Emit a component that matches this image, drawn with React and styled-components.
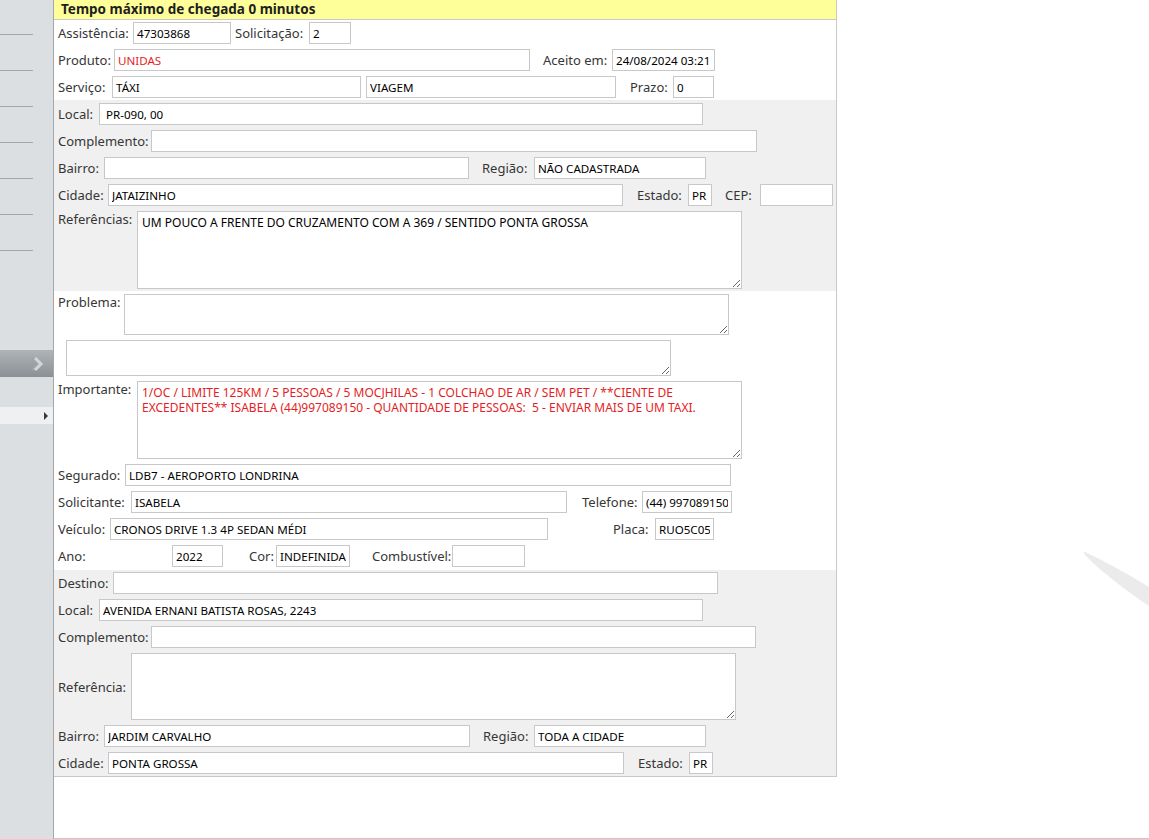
import React from "react";
import styled, { createGlobalStyle } from "styled-components";

const GlobalStyle = createGlobalStyle`
  html, body {
    margin: 0;
    padding: 0;
    background: #fff;
  }
  body {
    font-family: "Noto Sans", "DejaVu Sans", sans-serif;
  }
`;

const Page = styled.div`
  position: relative;
  display: flex;
  height: 839px;
  overflow: hidden;
`;

const Sidebar = styled.aside`
  width: 54px;
  flex-shrink: 0;
  box-sizing: border-box;
  background: #dcdfe2;
  border-right: 1px solid #a5a8ab;
  display: flex;
  flex-direction: column;
`;

const MenuList = styled.ul`
  list-style: none;
  margin: 0;
  padding: 34px 0 0;
`;

const MenuItem = styled.li`
  width: 33px;
  height: 35px;
  border-top: 1px solid #a4a7aa;
`;

const CollapseBar = styled.div`
  margin-top: 64px;
  height: 27px;
  display: flex;
  align-items: center;
  justify-content: flex-end;
  padding-right: 9px;
  background: linear-gradient(#b0b4b8, #8b9095);
`;

const SubItem = styled.div`
  margin-top: 30px;
  height: 17px;
  display: flex;
  align-items: center;
  justify-content: flex-end;
  padding-right: 5px;
  background: #eef0f1;
`;

const Caret = styled.span`
  width: 0;
  height: 0;
  border-left: 4px solid #3a3a3a;
  border-top: 4px solid transparent;
  border-bottom: 4px solid transparent;
`;

const Content = styled.main`
  flex: 1;
  box-sizing: border-box;
  height: 100%;
  border-bottom: 1px solid #c9c9c9;
`;

const Panel = styled.div`
  width: 783px;
  box-sizing: border-box;
  border-right: 1px solid #c9c9c9;
`;

const Header = styled.div`
  height: 19px;
  line-height: 19px;
  padding-left: 7px;
  background: #ffff99;
  border-bottom: 1px solid #c9c9c9;
  font-size: 13.5px;
  font-weight: 700;
  color: #1e1e1e;
  white-space: nowrap;
`;

const Section = styled.section`
  display: flex;
  flex-direction: column;
  gap: 5px;
  padding: ${(p) => p.$pad} 0 ${(p) => p.$padBottom} 4px;
  background: ${(p) => (p.$shaded ? "#f0f0f0" : "#fff")};
  border-bottom: ${(p) => (p.$closed ? "1px solid #c9c9c9" : "none")};
`;

const Row = styled.div`
  display: flex;
  align-items: ${(p) => p.$align || "center"};
  padding-left: ${(p) => p.$indent || 0}px;
`;

const Label = styled.label`
  flex-shrink: 0;
  width: ${(p) => p.$w}px;
  margin-left: ${(p) => p.$ml || 0}px;
  font-size: 13px;
  line-height: 16px;
  color: #363636;
  white-space: nowrap;
`;

const Input = styled.input`
  flex-shrink: 0;
  box-sizing: border-box;
  width: ${(p) => p.$w}px;
  height: 22px;
  margin: 0 0 0 ${(p) => p.$ml || 0}px;
  padding: 0 3px;
  border: 1px solid #c8c8c8;
  background: #fff;
  font-family: "Noto Sans", "DejaVu Sans", sans-serif;
  font-size: 11.6px;
  color: ${(p) => (p.$alert ? "#e41e24" : "#000")};
  outline: none;
`;

const TextArea = styled.textarea`
  flex-shrink: 0;
  box-sizing: border-box;
  width: ${(p) => p.$w}px;
  height: ${(p) => p.$h}px;
  margin: 0;
  padding: 3px 4px;
  border: 1px solid #c8c8c8;
  background: #fff;
  font-family: "Noto Sans", "DejaVu Sans", sans-serif;
  font-size: 12px;
  line-height: 15px;
  color: ${(p) => (p.$alert ? "#e41e24" : "#000")};
  outline: none;
`;

const Watermark = styled.svg`
  position: absolute;
  left: 1080px;
  top: 548px;
  width: 69px;
  height: 64px;
`;

const Chevron = () => (
  <svg width="14" height="16" viewBox="0 0 14 16">
    <path d="M2 2 L8 8 L2 14" fill="none" stroke="#9ea3a8" strokeWidth="3" />
    <path d="M5 2 L11 8 L5 14" fill="none" stroke="#d3d6d9" strokeWidth="3" />
  </svg>
);

const Field = ({ label, lw, lml, w, ml, value, alert }) => (
  <>
    <Label $w={lw} $ml={lml}>{label}</Label>
    <Input $w={w} $ml={ml} $alert={alert} readOnly defaultValue={value || ""} />
  </>
);

const importante =
  "1/OC / LIMITE 125KM / 5 PESSOAS / 5 MOCJHILAS - 1 COLCHAO DE AR / SEM PET / **CIENTE DE EXCEDENTES** ISABELA (44)997089150 - QUANTIDADE DE PESSOAS:  5 - ENVIAR MAIS DE UM TAXI.";

export default function App() {
  return (
    <>
      <GlobalStyle />
      <Page>
        <Sidebar>
          <MenuList>
            {Array.from({ length: 7 }).map((_, i) => (
              <MenuItem key={i} />
            ))}
          </MenuList>
          <CollapseBar>
            <Chevron />
          </CollapseBar>
          <SubItem>
            <Caret />
          </SubItem>
        </Sidebar>

        <Content>
          <Panel>
            <Header>Tempo máximo de chegada 0 minutos</Header>

            <Section $pad="2px" $padBottom="2px">
              <Row>
                <Field label="Assistência:" lw={75} w={98} value="47303868" />
                <Field label="Solicitação:" lw={74} lml={4} w={42} value="2" />
              </Row>
              <Row>
                <Field label="Produto:" lw={56} w={416} value="UNIDAS" alert />
                <Field label="Aceito em:" lw={69} lml={13} w={103} value="24/08/2024 03:21" />
              </Row>
              <Row>
                <Field label="Serviço:" lw={54} w={249} value="TÁXI" />
                <Input $w={250} $ml={5} readOnly defaultValue="VIAGEM" />
                <Field label="Prazo:" lw={43} lml={14} w={41} value="0" />
              </Row>
            </Section>

            <Section $shaded $pad="3px" $padBottom="2px">
              <Row>
                <Field label="Local:" lw={41} w={604} value=" PR-090, 00" />
              </Row>
              <Row>
                <Field label="Complemento:" lw={93} w={606} />
              </Row>
              <Row>
                <Field label="Bairro:" lw={46} w={365} />
                <Field label="Região:" lw={52} lml={13} w={172} value="NÃO CADASTRADA" />
              </Row>
              <Row>
                <Field label="Cidade:" lw={50} w={515} value="JATAIZINHO" />
                <Field label="Estado:" lw={51} lml={14} w={24} value="PR" />
                <Field label="CEP:" lw={35} lml={13} w={73} />
              </Row>
              <Row $align="flex-start">
                <Label $w={79}>Referências:</Label>
                <TextArea
                  $w={605}
                  $h={78}
                  readOnly
                  defaultValue="UM POUCO A FRENTE DO CRUZAMENTO COM A 369 / SENTIDO PONTA GROSSA"
                />
              </Row>
            </Section>

            <Section $pad="3px" $padBottom="3px">
              <Row $align="flex-start">
                <Label $w={66}>Problema:</Label>
                <TextArea $w={605} $h={41} readOnly defaultValue="" />
              </Row>
              <Row $indent={8}>
                <TextArea $w={605} $h={36} readOnly defaultValue="" />
              </Row>
              <Row $align="flex-start">
                <Label $w={79}>Importante:</Label>
                <TextArea $w={605} $h={78} $alert readOnly defaultValue={importante} />
              </Row>
              <Row>
                <Field label="Segurado:" lw={67} w={606} value="LDB7 - AEROPORTO LONDRINA" />
              </Row>
              <Row>
                <Field label="Solicitante:" lw={73} w={436} value="ISABELA" />
                <Field label="Telefone:" lw={60} lml={15} w={90} value="(44) 997089150" />
              </Row>
              <Row>
                <Field label="Veículo:" lw={52} w={438} value="CRONOS DRIVE 1.3 4P SEDAN MÉDI" />
                <Field label="Placa:" lw={42} lml={65} w={59} value="RUO5C05" />
              </Row>
              <Row>
                <Field label="Ano:" lw={114} w={51} value="2022" />
                <Field label="Cor:" lw={27} lml={26} w={74} value="INDEFINIDA" />
                <Field label="Combustível:" lw={80} lml={22} w={73} />
              </Row>
            </Section>

            <Section $shaded $closed $pad="2px" $padBottom="2px">
              <Row>
                <Field label="Destino:" lw={55} w={605} />
              </Row>
              <Row>
                <Field label="Local:" lw={41} w={604} value="AVENIDA ERNANI BATISTA ROSAS, 2243" />
              </Row>
              <Row>
                <Field label="Complemento:" lw={93} w={605} />
              </Row>
              <Row>
                <Label $w={73}>Referência:</Label>
                <TextArea $w={605} $h={67} readOnly defaultValue="" />
              </Row>
              <Row>
                <Field label="Bairro:" lw={46} w={366} value="JARDIM CARVALHO" />
                <Field label="Região:" lw={51} lml={13} w={172} value="TODA A CIDADE" />
              </Row>
              <Row>
                <Field label="Cidade:" lw={50} w={516} value="PONTA GROSSA" />
                <Field label="Estado:" lw={51} lml={14} w={24} value="PR" />
              </Row>
            </Section>
          </Panel>
        </Content>

        <Watermark viewBox="0 0 69 64">
          <path
            d="M5 4 C 20 11, 45 24, 69 39 L 69 58 C 45 42, 22 24, 8 10 C 4 6, 3 4, 5 4 Z"
            fill="#ebebeb"
          />
        </Watermark>
      </Page>
    </>
  );
}
